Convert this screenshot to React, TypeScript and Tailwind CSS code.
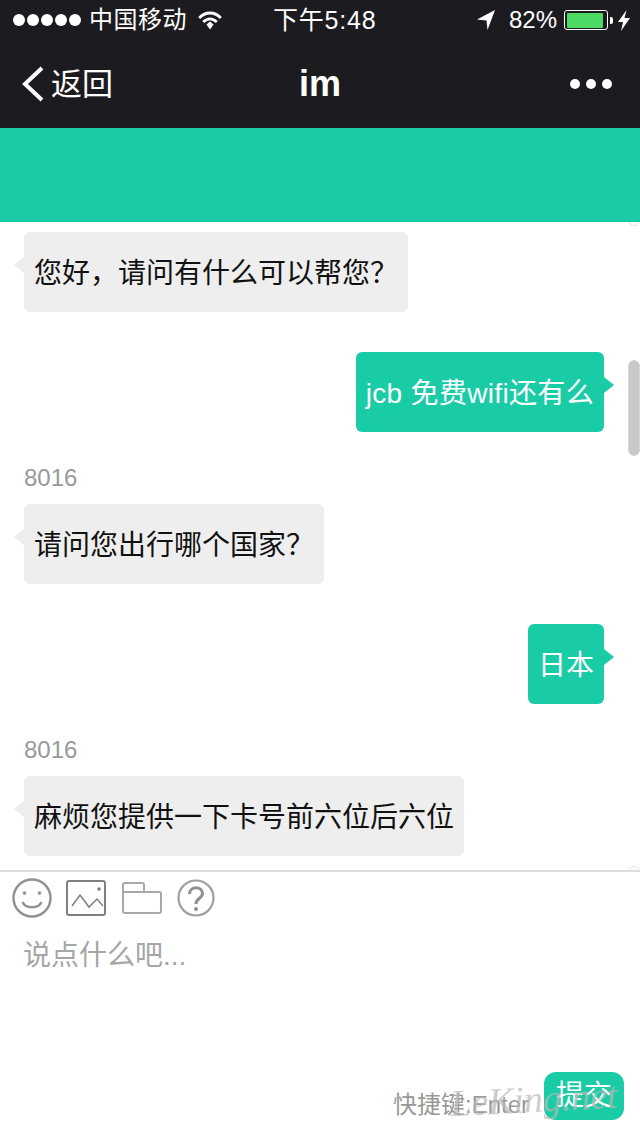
import React from "react";

const cjk = { fontFamily: '"Liberation Sans", "Noto Sans CJK SC", sans-serif' };

function Left({ text, label }: { text: string; label?: string }) {
  return (
    <div className="flex flex-col items-start">
      {label && <div className="text-[24px] leading-[28px] text-[#999999] mb-[12px] mt-[-8px]">{label}</div>}
      <div className="relative h-[80px] flex items-center px-[10px] pt-[4px] bg-[#eeeeee] rounded-[6px] text-[28px] text-[#111111] whitespace-nowrap">
        <div className="absolute left-[-10px] top-[25px] w-0 h-0 border-y-[8px] border-y-transparent border-r-[10px] border-r-[#eeeeee]" />
        {text}
      </div>
    </div>
  );
}

function Right({ text, wide }: { text: string; wide?: boolean }) {
  return (
    <div className="flex justify-end">
      <div className={wide ? "relative h-[80px] flex items-center px-[10px] pt-[4px] bg-[#1acca6] rounded-[6px] text-[28px] tracking-[0.33px] text-white whitespace-nowrap" : "relative h-[80px] flex items-center px-[10px] pt-[4px] bg-[#1acca6] rounded-[6px] text-[28px] text-white whitespace-nowrap"}>
        <div className="absolute right-[-10px] top-[25px] w-0 h-0 border-y-[8px] border-y-transparent border-l-[10px] border-l-[#1acca6]" />
        {text}
      </div>
    </div>
  );
}

export default function App() {
  return (
    <div className="relative w-[640px] h-[1136px] bg-white overflow-hidden flex flex-col" style={cjk}>
      <div className="h-[128px] bg-[#1c1c20] text-white flex flex-col shrink-0">
        <div className="h-[40px] relative flex items-center justify-between pl-[13px] pr-[10px] text-[25px]">
          <div className="flex items-center">
            <div className="flex gap-[2px]">
              {[0, 1, 2, 3, 4].map((i) => (
                <div key={i} className="w-[12px] h-[12px] rounded-full bg-white" />
              ))}
            </div>
            <span className="ml-[8px] text-[24px] leading-none tracking-[0.5px]">中国移动</span>
            <svg className="ml-[11px]" width="24" height="19" viewBox="0 0 24 19" fill="none" stroke="white">
              <path d="M1.2 7C7.5 .3 16.5 .3 22.8 7" strokeWidth="2.8" />
              <path d="M5.2 11C9.5 6.8 14.5 6.8 18.8 11" strokeWidth="2.8" />
              <path d="M8.4 13.6 12 10.6 15.6 13.6 12 18.5Z" fill="white" stroke="none" />
            </svg>
          </div>
          <div className="absolute left-[273px] top-[5px] text-[25px] leading-[30px] tracking-[0.8px]">下午5:48</div>
          <div className="flex items-center">
            <svg width="18" height="20" viewBox="0 0 18 20">
              <path d="M18 0 0 9.5 9.5 10.5 10.5 20Z" fill="white" />
            </svg>
            <span className="ml-[14px] text-[24px] leading-none">82%</span>
            <div className="ml-[7px] w-[44px] h-[20px] border border-white rounded-[3px] p-[1.5px] flex">
              <div className="w-[36px] h-full bg-[#4cd964] rounded-[1px]" />
            </div>
            <div className="ml-[2px] w-[3px] h-[7px] bg-white rounded-r-[2px]" />
            <svg className="ml-[5px]" width="12" height="21" viewBox="0 0 12 21">
              <path d="M8.5 0 0 12H5L3 21 12 8H6.5Z" fill="white" />
            </svg>
          </div>
        </div>
        <div className="flex-1 relative flex items-center justify-between pl-[22px] pr-[28px]">
          <div className="flex items-center">
            <svg width="22" height="36" viewBox="0 0 22 36" fill="none" stroke="white" strokeWidth="4">
              <path d="M20 2 3 18 20 34" />
            </svg>
            <span className="ml-[7px] text-[31px] leading-none">返回</span>
          </div>
          <div className="absolute left-0 right-0 text-center text-[36px] font-bold leading-none">im</div>
          <div className="flex gap-[6px]">
            {[0, 1, 2].map((i) => (
              <div key={i} className="w-[10px] h-[10px] rounded-full bg-white" />
            ))}
          </div>
        </div>
      </div>

      <div className="h-[94px] bg-[#1acca6] shrink-0" />

      <div className="relative h-[648px] shrink-0 overflow-hidden pt-[10px] pl-[24px] pr-[36px] flex flex-col gap-[40px]">
        <Left text="您好，请问有什么可以帮您？" />
        <Right wide text="jcb 免费wifi还有么" />
        <Left label="8016" text="请问您出行哪个国家？" />
        <Right text="日本" />
        <Left label="8016" text="麻烦您提供一下卡号前六位后六位" />
        <div className="absolute right-0 top-[-8px] w-[12px] h-[12px] rounded-full bg-white border border-[#e2e2e2]" />
        <div className="absolute right-0 top-[138px] w-[12px] h-[96px] rounded-full bg-[#c8c8c8] border border-[#d8d8d8]" />
        <div className="absolute right-0 bottom-[-8px] w-[12px] h-[12px] rounded-full bg-white border border-[#e2e2e2]" />
      </div>

      <div className="flex-1 border-t-2 border-[#dddddd] flex flex-col bg-white relative">
        <div className="flex items-center pl-[12px] pt-[6px] gap-[14px] h-[46px] shrink-0 blur-[0.4px]">
          <svg width="40" height="40" viewBox="0 0 40 40" fill="none" stroke="#909090" strokeWidth="2.4">
            <circle cx="20" cy="20" r="18.5" />
            <circle cx="12.5" cy="15" r="1.8" fill="#909090" stroke="none" />
            <circle cx="27.5" cy="15" r="1.8" fill="#909090" stroke="none" />
            <path d="M10.5 24C13.5 31 26.5 31 29.5 24" />
          </svg>
          <svg width="40" height="36" viewBox="0 0 40 36" fill="none" stroke="#808080" strokeWidth="2">
            <rect x="1" y="1" width="38" height="34" rx="2" />
            <path d="M6 26 14 15 23 27 31 19 37 26" strokeWidth="1.5" />
            <circle cx="33" cy="9" r="1.8" fill="#808080" stroke="none" />
          </svg>
          <svg width="41" height="32" className="ml-[1px]" viewBox="0 0 41 32" fill="none" stroke="#a8a8a8" strokeWidth="2">
            <path d="M2 3Q2 1 4 1H21Q23 1 23 3V10H38Q40 10 40 12V29Q40 31 38 31H4Q2 31 2 29Z" />
            <path d="M2 10H23" />
          </svg>
          <svg width="38" height="38" className="ml-[1px]" viewBox="0 0 38 38" fill="none" stroke="#a0a0a0" strokeWidth="2.2">
            <circle cx="19" cy="19" r="17.5" />
            <path d="M12.5 15C12.5 6.5 25.5 7 25.5 14.5 25.5 19.5 19 19 19 25" strokeWidth="3" stroke="#909090" />
            <circle cx="19" cy="30" r="2" fill="#909090" stroke="none" />
          </svg>
        </div>
        <div className="pl-[23px] mt-[20px] text-[28px] leading-[36px] text-[#a6a6a6]">说点什么吧...</div>
        <div className="flex-1" />
        <div className="flex items-center justify-end pr-[16px] pb-[16px]">
          <span className="text-[24px] leading-none text-[#999999] mr-[15px] mt-[18px]">快捷键:Enter</span>
          <div className="w-[80px] h-[48px] rounded-[12px] bg-[#1acca6] text-white text-[28px] flex items-center justify-center">提交</div>
        </div>
      </div>

      <div
        className="absolute left-[450px] top-[1080px] text-[38px] leading-none italic text-[#b8b8b8] opacity-70 whitespace-nowrap pointer-events-none rotate-[-3deg]"
        style={{ fontFamily: '"Liberation Serif", serif' }}
      >
        LeKing.net
      </div>
    </div>
  );
}
